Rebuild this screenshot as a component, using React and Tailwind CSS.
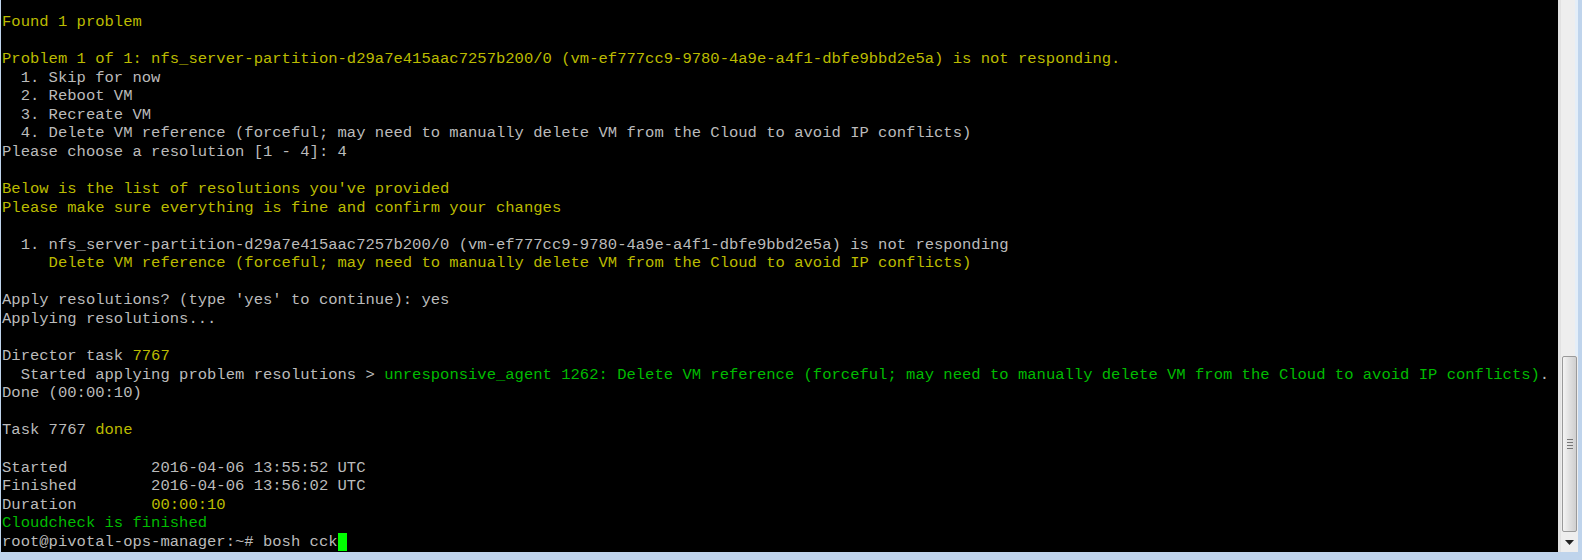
const W = "text-[#bbbbbb]";
const Y = "text-[#bbbb00]";
const G = "text-[#00bb00]";

// each line is a list of [color, text] segments
const lines = [
  [[Y, "Found 1 problem"]],
  [],
  [[Y, "Problem 1 of 1: nfs_server-partition-d29a7e415aac7257b200/0 (vm-ef777cc9-9780-4a9e-a4f1-dbfe9bbd2e5a) is not responding."]],
  [[W, "  1. Skip for now"]],
  [[W, "  2. Reboot VM"]],
  [[W, "  3. Recreate VM"]],
  [[W, "  4. Delete VM reference (forceful; may need to manually delete VM from the Cloud to avoid IP conflicts)"]],
  [[W, "Please choose a resolution [1 - 4]: 4"]],
  [],
  [[Y, "Below is the list of resolutions you've provided"]],
  [[Y, "Please make sure everything is fine and confirm your changes"]],
  [],
  [[W, "  1. nfs_server-partition-d29a7e415aac7257b200/0 (vm-ef777cc9-9780-4a9e-a4f1-dbfe9bbd2e5a) is not responding"]],
  [[Y, "     Delete VM reference (forceful; may need to manually delete VM from the Cloud to avoid IP conflicts)"]],
  [],
  [[W, "Apply resolutions? (type 'yes' to continue): yes"]],
  [[W, "Applying resolutions..."]],
  [],
  [[W, "Director task "], [Y, "7767"]],
  [
    [W, "  Started applying problem resolutions > "],
    [G, "unresponsive_agent 1262: Delete VM reference (forceful; may need to manually delete VM from the Cloud to avoid IP conflicts)"],
    [W, "."],
  ],
  [[W, "Done (00:00:10)"]],
  [],
  [[W, "Task 7767 "], [Y, "done"]],
  [],
  [[W, "Started         2016-04-06 13:55:52 UTC"]],
  [[W, "Finished        2016-04-06 13:56:02 UTC"]],
  [[W, "Duration        "], [Y, "00:00:10"]],
  [[G, "Cloudcheck is finished"]],
];

function Scrollbar() {
  return (
    <div className="w-[20px] flex flex-col bg-[#eeeeee] border-l-[3px] border-[#e2e2e2]">
      <div className="flex-1 border-r-[3px] border-[#e4eef8]" />
      {/* thumb */}
      <div className="h-[176px] mx-[1px] rounded-[2px] border border-[#9a9a9a] bg-gradient-to-r from-[#f4f4f4] via-[#e0e0e0] to-[#cfcfcf] flex items-center justify-center">
        <div className="flex flex-col gap-[2px]">
          <div className="w-[6px] h-[1px] bg-[#777]" />
          <div className="w-[6px] h-[1px] bg-[#777]" />
          <div className="w-[6px] h-[1px] bg-[#777]" />
          <div className="w-[6px] h-[1px] bg-[#777]" />
        </div>
      </div>
      {/* down arrow */}
      <div className="h-[20px] flex items-center justify-center">
        <svg width="9" height="5" viewBox="0 0 9 5">
          <path d="M0 0h9L4.5 5z" fill="#222" />
        </svg>
      </div>
    </div>
  );
}

export default function App() {
  return (
    <div className="w-[1582px] h-[560px] flex flex-col bg-[#bfd4ec] overflow-hidden">
      <div className="flex h-[552px]">
        <div
          className="flex-1 bg-black ml-[1px] pl-[1px] pt-[13px] text-[15.54px] leading-[18.57px] overflow-hidden"
          style={{ fontFamily: '"Liberation Mono", "Courier New", monospace' }}
        >
          {lines.map((segs, i) => (
            <div key={i} className="h-[18.57px] whitespace-pre">
              {segs.map(([cls, txt], j) => (
                <span key={j} className={cls}>
                  {txt}
                </span>
              ))}
            </div>
          ))}
          <div className="h-[18.57px] whitespace-pre flex items-stretch">
            <span className={W}>root@pivotal-ops-manager:~# bosh cck</span>
            <span className="inline-block w-[9.3px] bg-[#00ff00]" />
          </div>
        </div>
        <Scrollbar />
        <div className="w-[4px]" />
      </div>
    </div>
  );
}
